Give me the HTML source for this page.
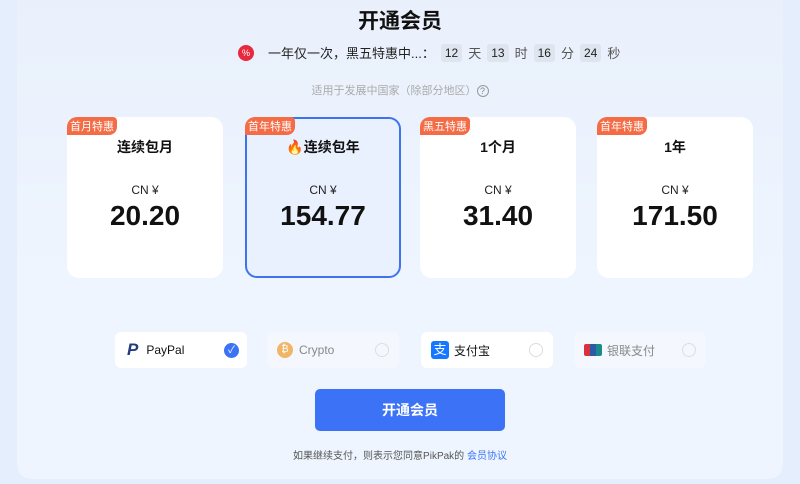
<!DOCTYPE html>
<html><head><meta charset="utf-8"><style>
*{margin:0;padding:0;box-sizing:border-box}
body{width:800px;height:484px;overflow:hidden;background:#e4eefc;font-family:"Liberation Sans","Noto Sans CJK SC",sans-serif;position:relative;color:#111}
.panel{position:absolute;left:17px;top:-20px;width:766px;height:499px;border-radius:14px;background:linear-gradient(#e9f0fb,#eef5ff 60%,#eef5fe)}
.abs{position:absolute}
h1{position:absolute;top:5px;left:0;width:800px;text-align:center;font-size:21px;font-weight:700}
.cd{position:absolute;top:43px;left:238px;font-size:13px;display:flex;align-items:center;color:#222}
.cd .n{background:#dfe5ee;border-radius:3px;padding:2px 4px;margin:0 6px;font-size:12px}
.cd .u{color:#555}
.card{position:absolute;top:117px;width:156px;height:161px;background:#fff;border-radius:12px;text-align:center}
.card.sel{background:#eaf1fe;border:2px solid #3d74ee}
.tag{position:absolute;left:0;top:0;background:#f46c45;color:#fff;font-size:11px;padding:1px 3px;border-radius:10px 4px 8px 0}
.sel .tag{left:-2px;top:-2px}
.t{position:absolute;top:20px;width:100%;font-weight:700;font-size:14px}
.cn{position:absolute;top:66px;width:100%;font-size:12px;color:#222}
.p{position:absolute;top:83px;width:100%;font-size:28px;font-weight:700}
.pay{position:absolute;top:332px;width:132px;height:36px;border-radius:6px;background:#fff;display:flex;align-items:center;font-size:12px}
.pay.dim{background:#f4f8fe;color:#888}
.rad{position:absolute;right:10px;top:11px;width:14px;height:14px;border-radius:50%;border:1px solid #ddd}
.btn{position:absolute;left:315px;top:389px;width:190px;height:42px;border-radius:5px;background:#3b72f6;color:#fff;font-weight:700;font-size:14px;text-align:center;line-height:42px}
</style></head><body>
<div class="panel"></div>
<h1>开通会员</h1>
<div class="cd"><span style="width:16px;height:16px;border-radius:50%;background:#e8283c;color:#fff;font-size:9px;text-align:center;line-height:16px;margin-right:14px">%</span>一年仅一次，黑五特惠中...：<span class="n">12</span><span class="u">天</span><span class="n">13</span><span class="u">时</span><span class="n">16</span><span class="u">分</span><span class="n">24</span><span class="u">秒</span></div>
<div class="abs" style="top:82px;left:0;width:800px;text-align:center;font-size:11px;color:#aaa">适用于发展中国家（除部分地区）<span style="display:inline-block;width:12px;height:12px;border:1px solid #999;border-radius:50%;font-size:9px;line-height:10px;color:#888">?</span></div>
<div class="card" style="left:67px"><div class="tag">首月特惠</div><div class="t">连续包月</div><div class="cn">CN ¥</div><div class="p">20.20</div></div>
<div class="card sel" style="left:245px;width:156px"><div class="tag">首年特惠</div><div class="t" style="top:18px"><span style="color:#f4623a">🔥</span>连续包年</div><div class="cn" style="top:64px">CN ¥</div><div class="p" style="top:81px">154.77</div></div>
<div class="card" style="left:420px"><div class="tag">黑五特惠</div><div class="t">1个月</div><div class="cn">CN ¥</div><div class="p">31.40</div></div>
<div class="card" style="left:597px"><div class="tag">首年特惠</div><div class="t">1年</div><div class="cn">CN ¥</div><div class="p">171.50</div></div>

<div class="pay" style="left:115px"><span style="margin:0 8px 0 12px;font-weight:700;font-style:italic;color:#253b80;font-size:17px">P</span>PayPal<span style="position:absolute;right:8px;top:11px;width:15px;height:15px;border-radius:50%;background:#3b72f6;color:#fff;font-size:10px;text-align:center;line-height:15px">✓</span></div>
<div class="pay dim" style="left:267px"><span style="margin:0 6px 0 10px;width:16px;height:16px;border-radius:50%;background:#f0b565;color:#fff;font-size:10px;text-align:center;line-height:16px">₿</span>Crypto<span class="rad"></span></div>
<div class="pay" style="left:421px"><span style="margin:0 5px 0 10px;width:18px;height:18px;border-radius:3px;background:#1677ff;color:#fff;font-size:13px;text-align:center;line-height:18px">支</span>支付宝<span class="rad"></span></div>
<div class="pay dim" style="left:574px"><span style="margin:0 5px 0 10px;width:18px;height:12px;border-radius:2px;background:linear-gradient(90deg,#d6333f 33%,#2b5aa6 33% 66%,#1b8a8a 66%)"></span>银联支付<span class="rad"></span></div>
<div class="btn">开通会员</div>
<div class="abs" style="top:447px;left:0;width:800px;text-align:center;font-size:10px;color:#555">如果继续支付，则表示您同意PikPak的 <span style="color:#3b72f6">会员协议</span></div>
</body></html>
